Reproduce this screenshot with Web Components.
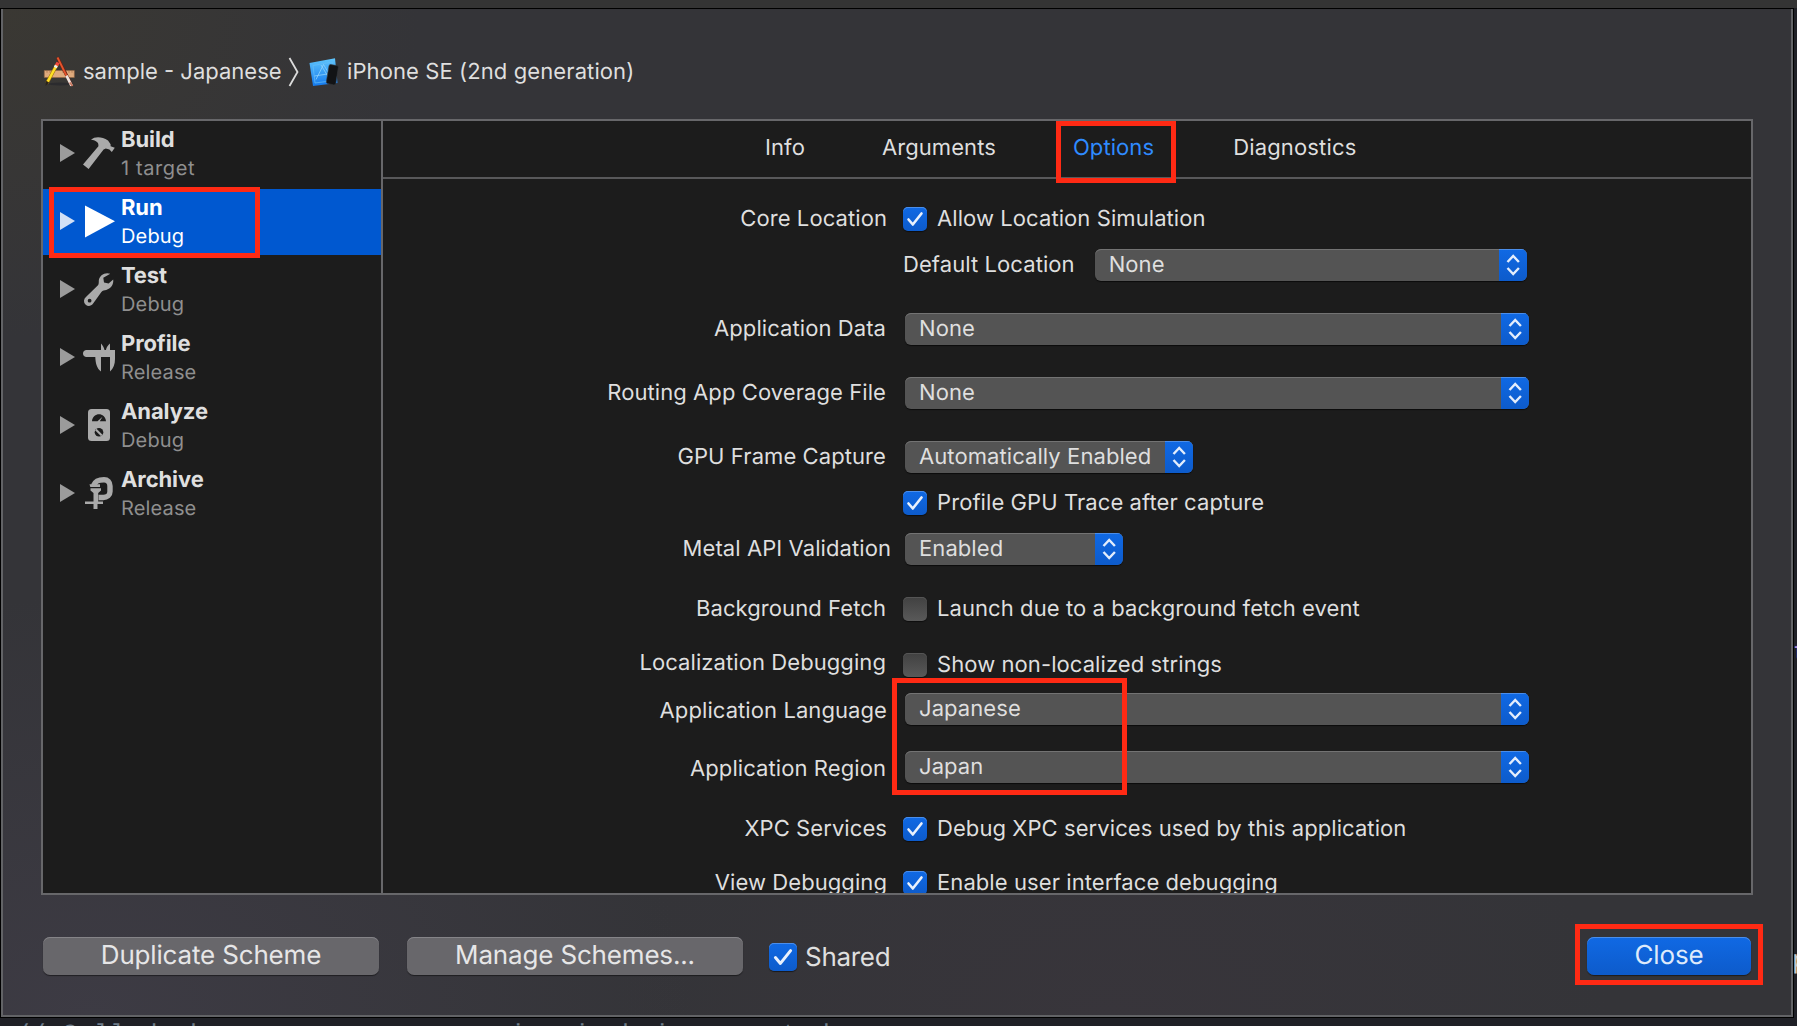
<!DOCTYPE html>
<html lang="en">
<head>
<meta charset="utf-8">
<title>Edit Scheme</title>
<style>
html,body{margin:0;height:100%;overflow:hidden;background:#1f2026}
body{font-family:Inter,"Liberation Sans",sans-serif;font-size:22px;letter-spacing:.08px;color:#dfdfdf;text-rendering:geometricPrecision}
</style>
</head>
<body>
<scheme-window>
  <crumb-bar slot="crumbs"></crumb-bar>
  <scheme-sidebar slot="sidebar">
    <scheme-action icon="hammer" name="Build" detail="1 target" style="--track:.6px"></scheme-action>
    <scheme-action icon="play" name="Run" detail="Debug" selected><mark-frame style="--x:6px;--y:-2px;--w:211px;--h:71px"></mark-frame></scheme-action>
    <scheme-action icon="wrench" name="Test" detail="Debug"></scheme-action>
    <scheme-action icon="caliper" name="Profile" detail="Release"></scheme-action>
    <scheme-action icon="meter" name="Analyze" detail="Debug"></scheme-action>
    <scheme-action icon="clamp" name="Archive" detail="Release"></scheme-action>
  </scheme-sidebar>
  <tab-strip slot="tabs">
    <tab-item>Info</tab-item><tab-item>Arguments</tab-item>
    <tab-item active>Options<mark-frame style="--x:-17px;--y:-13px;--w:120px;--h:62px"></mark-frame></tab-item>
    <tab-item style="padding-left:2px;letter-spacing:.16px">Diagnostics</tab-item>
  </tab-strip>
  <option-row label="Core Location" style="--gap:24px"><check-box checked>Allow Location Simulation</check-box></option-row>
  <option-row label="" style="--gap:14px"><span>Default Location</span><pop-up style="--w:432px;--ml:20px">None</pop-up></option-row>
  <option-row label="Application Data" style="--gap:32px"><pop-up style="--w:624px">None</pop-up></option-row>
  <option-row label="Routing App Coverage File" style="--gap:32px"><pop-up style="--w:624px">None</pop-up></option-row>
  <option-row label="GPU Frame Capture" style="--gap:32px"><pop-up style="--w:288px">Automatically Enabled</pop-up></option-row>
  <option-row label="" style="--gap:14px"><check-box checked>Profile GPU Trace after capture</check-box></option-row>
  <option-row label="Metal API Validation" style="--gap:14px;--end:12px"><pop-up style="--w:218px">Enabled</pop-up></option-row>
  <option-row label="Background Fetch" style="--gap:28px"><check-box>Launch due to a background fetch event</check-box></option-row>
  <option-row label="Localization Debugging" style="--gap:24px;--up:4px"><check-box>Show non-localized strings</check-box></option-row>
  <option-row label="Application Language" style="--gap:12px;--down:4px;--nudge:1px"><pop-up style="--w:624px">Japanese</pop-up><mark-frame style="--x:509px;--y:-15px;--w:235px;--h:117px"></mark-frame></option-row>
  <option-row label="Application Region" style="--gap:26px;--down:4px"><pop-up style="--w:624px">Japan</pop-up></option-row>
  <option-row label="XPC Services" style="--gap:30px;--nudge:1px"><check-box checked>Debug XPC services used by this application</check-box></option-row>
  <option-row label="View Debugging" style="--gap:22px;--nudge:1px"><check-box checked>Enable user interface debugging</check-box></option-row>
  <push-button slot="footer" style="--w:336px">Duplicate Scheme</push-button>
  <push-button slot="footer" style="--w:336px;--ml:28px">Manage Schemes...</push-button>
  <check-box slot="footer" checked large style="margin-left:26px;padding-top:2px">Shared</check-box>
  <push-button slot="footer" primary style="--w:164px;--ml:auto">Close<mark-frame style="--x:-12px;--y:-13px;--w:188px;--h:61px"></mark-frame></push-button>
</scheme-window>

<script>
function define(name, html) {
  const template = document.createElement('template');
  customElements.define(name, class extends HTMLElement {
    connectedCallback() {
      if (this.shadowRoot) return;
      const root = this.attachShadow({ mode: 'open' });
      template.innerHTML = typeof html === 'function' ? html(this) : html;
      root.append(template.content.cloneNode(true));
    }
  });
}

const ICONS = {
  hammer: '<path d="M8 2.8C12-.8 19-.4 25 3.6l2.6 3.6v2l4.2 1.6-3 4.2-2.4-2.6-3.6-.8-2.2.9L5.6 32 0 27.6 15.4 9.2C16 6 13.500 3.300 8 2.800Z"/>',
  play: '<path d="M2 .5 32 16.300 2 32.500Z"/>',
  wrench: '<path fill-rule="evenodd" d="M27.300.7C22-1.200 16.300 2.200 15.800 7.600c-.1 2 .2 3.300-.8 4.700L3.200 23.800a5 5 0 1 0 7.300 6.300l7.900-11.200c1.300-1.400 3.100-1.500 4.800-1.900 4.400-1.200 7.700-5.300 7-10.400l-4.600 3.800-4.600-1-.7-4.600ZM6.600 25.800a1.900 1.900 0 1 1 0 3.800 1.900 1.900 0 0 1 0-3.800Z"/>',
  caliper: '<path d="M3 9h15V2.500c1.300 1.800 3 3.500 3.500 6.500h1.500c.3-3 2.300-5 4-6.500V9h5v9c0 5-1.500 9.500-5 12.500V16h-9v14.500c-4-3-5.500-8-5.700-14.500H3C-1 15.500-1 9.500 3 9Z"/>',
  meter: '<rect x="5" y="0" width="22" height="32" rx="3.500"/><path fill="#1c1c1c" d="M9 12.200C9.800 3 22.200 3 23 12.200h-6.200l2.700-4.500-5 4.500Z"/><circle cx="16" cy="23.200" r="4.300" fill="#1c1c1c"/><path d="m12.800 20.500 6 6" stroke="#aaa" stroke-width="2"/>',
  clamp: '<path d="M15.500 20.500h4.700c4 0 6.800-2.500 6.800-6V9c0-4-2.500-6.300-6-6.300-5.500 0-8.500 1-10.500 5.800" fill="none" stroke="#aaa" stroke-width="5.400"/><path d="M6.500 7.300H17v2.600H7.300ZM7.500 11.300H18v2.200l-2.800 2.500v8.500H20v2.500h-5.500v5h-4v-5H2v-2.500h8.500V16L7.500 13.500Z"/>'
};

define('mark-frame', `<style>
:host{position:absolute;left:var(--x);top:var(--y);width:var(--w);height:var(--h);box-sizing:border-box;border:5px solid #ff2a14;z-index:3;pointer-events:none}
</style>`);

define('crumb-bar', `<style>
:host{display:flex;align-items:center;height:34px;white-space:pre;padding:1px 0 0 2px}
svg{flex:none;display:block}
.app{margin-right:7px}.arrow{margin:0 9px 0 7px}.device{margin-right:8px}
.project{width:198px;letter-spacing:0}
</style>
<svg class="app" width="33" height="32" viewBox="0 0 33 32">
 <ellipse cx="17" cy="28" rx="12" ry="1.500" fill="#2b2b2e"/>
 <path fill="#dfaa7c" stroke="#936643" stroke-width=".6" d="M1.300 14.500h30v7h-30Z"/><path d="M4 14.800v2m3-2v2m3-2v2m10-2v2m3-2v2m3-2v2m3-2v2" stroke="#a5714b" stroke-width=".7"/>
 <path d="M14.500 1.500 28 28" stroke="#6b2015" stroke-width="3"/><path d="M14.500 1.500 23.600 20" stroke="#e5552c" stroke-width="1.800"/><path d="m23.500 19.600 5 10" stroke="#eee4df" stroke-width="2.600"/><path d="m26.800 26.500 2.700 3.500" stroke="#c9785f" stroke-width="2"/>
 <path d="M14 8.500 4 27" stroke="#9d7108" stroke-width="3.600"/><path d="M14 8.500 4.700 25.600" stroke="#ffdf25" stroke-width="2.500"/><path d="m13.500 9.500 1.600-3" stroke="#f1483d" stroke-width="3.400"/><path d="m12.300 11.500 1-2" stroke="#eee" stroke-width="3.200"/><path d="M2.500 30 3 25l3 1.500Z" fill="#29231c"/>
</svg>
<span class="project">sample - Japanese</span>
<svg class="arrow" width="12" height="30" viewBox="0 0 12 30"><path d="m1.500 1 8 14-8 14" fill="none" stroke="#dcdcdc" stroke-width="1.800"/></svg>
<svg class="device" width="30" height="30" viewBox="0 0 30 30">
 <defs><linearGradient id="b" x2="0" y2="1"><stop stop-color="#5fc5fc"/><stop offset="1" stop-color="#1479ed"/></linearGradient></defs>
 <path d="M.5 6 26 1.300 28.500 26 4 29Z" fill="url(#b)"/>
 <path d="M4 8.500 23.500 5 25 23.500 6 26Z" fill="none" stroke="#65bff7" stroke-width=".7"/>
 <path d="m7 22.500 7.500-15L22 20M5.500 19l16-2.500M12 8l8 13" fill="none" stroke="#8fd2fa" stroke-width=".8"/>
 <path d="M21.500 7.500 28 8.600q1.600.4 1.300 2L26.800 26.500q-.4 1.700-2 1.400L18.500 26.500q-1.500-.4-1.100-2L20 9q.3-1.700 1.500-1.500Z" fill="#121315" stroke="#34373b" stroke-width=".6"/>
</svg>
<span style="letter-spacing:.1px">iPhone SE (2nd generation)</span>`);

define('scheme-sidebar', `<style>
:host{display:flex;flex-direction:column;gap:2px;width:338px;flex:none}
</style><slot></slot>`);

define('scheme-action', el => {
  const on = el.hasAttribute('selected');
  return `<style>
:host{display:flex;position:relative;height:66px;${on ? 'background:#0058d0;color:#fff;' : ''}}
.tri{width:15px;height:18px;margin:23px 8px 0 17px;fill:${on ? '#d2e0f6' : '#9b9b9b'};flex:none}
.icon{width:33px;height:33px;margin:15.500px 5px 0 0;fill:${on ? '#fff' : '#aaa'};flex:none;overflow:visible}
.text{display:flex;flex-direction:column;padding-top:5px;line-height:28px}
b{letter-spacing:-.1px;font-weight:${on ? 700 : 650}}
small{font-size:20px;letter-spacing:var(--track,.15px);color:${on ? '#fff' : '#8f8f8f'}}
</style>
<svg class="tri" viewBox="0 0 15 18"><path d="M0 0 15 9 0 18Z"/></svg>
<svg class="icon" viewBox="0 0 33 33">${ICONS[el.getAttribute('icon')]}</svg>
<div class="text"><b>${el.getAttribute('name')}</b><small>${el.getAttribute('detail')}</small></div><slot></slot>`;
});

define('tab-strip', `<style>
:host{display:flex;align-items:center;gap:77px;height:53px;padding:0 0 3px 382px;border-bottom:2px solid #58585a}
</style><slot></slot>`);

define('tab-item', el => `<style>
:host{display:block;position:relative;line-height:28px;${el.hasAttribute('active') ? 'color:#2f8bff;' : ''}}
</style><slot></slot>`);

define('option-row', el => `<style>
:host{display:flex;align-items:center;position:relative;height:32px;margin-top:var(--gap);flex:none;line-height:32px;white-space:nowrap}
label{width:503px;text-align:right;margin-right:var(--end,17px);padding-top:var(--down,0px);padding-bottom:var(--up,0px);flex:none;text-indent:0}
:host([label="Metal API Validation"]) label{width:508px}
:host([style*="nudge"]) label,:host([label="Core Location"]) label{width:504px;margin-right:16px}
</style><label>${el.getAttribute('label')}</label><slot></slot>`);

define('check-box', el => {
  const on = el.hasAttribute('checked'), s = el.hasAttribute('large') ? 28 : 24;
  return `<style>
:host{display:flex;align-items:center;gap:${s === 28 ? 8 : 10}px;${s === 28 ? 'font-size:26px;letter-spacing:-.3px;' : ''}}
i{display:block;width:${s}px;height:${s}px;border-radius:5px;flex:none;background:${on ? 'linear-gradient(#1069e4,#0d5bcb)' : 'linear-gradient(#414141,#595959)'};box-shadow:inset 0 1px ${on ? '#4b8eea' : '#555'},0 1px 1px #0008}
svg{display:block;width:100%;height:100%}
</style><i>${on ? '<svg viewBox="0 0 24 24"><path d="m5.500 12.500 4.300 5L18.500 6.500" fill="none" stroke="#e9f1fd" stroke-width="2.600" stroke-linecap="round" stroke-linejoin="round"/></svg>' : ''}</i><slot></slot>`;
});

define('pop-up', `<style>
:host{display:flex;align-items:stretch;width:var(--w);height:32px;margin-left:var(--ml,2px);background:#545454;border-radius:6px;overflow:hidden;line-height:32px;box-shadow:inset 0 1px #737373,0 1px 1px #0009}
.value{flex:1;padding-left:14px}
.knob{width:28px;background:linear-gradient(#1069e4,#0d5bcb);box-shadow:inset 0 1px #4b8eea}
svg{display:block}
</style><div class="value"><slot></slot></div><div class="knob"><svg width="28" height="32" viewBox="0 0 28 32"><path d="m8.500 13 5.700-6 5.700 6M8.500 19l5.700 6 5.700-6" fill="none" stroke="#e3edfc" stroke-width="2.400"/></svg></div>`);

define('push-button', el => {
  const p = el.hasAttribute('primary');
  return `<style>
:host{display:block;position:relative;width:var(--w);height:38px;margin-left:var(--ml,0);border-radius:7px;text-align:center;line-height:38px;font-size:26px;letter-spacing:-.17px;
color:${p ? '#dfeafb' : '#e6e6e7'};background:${p ? 'linear-gradient(#1069e4,#0d5bcb)' : '#68676b'};box-shadow:inset 0 1px ${p ? '#4b8eea' : '#858488'},0 1px 1px #0007}
</style><slot></slot>`;
});

define('code-scrap', `<style>
:host{position:absolute;font:26px/30px "Liberation Mono",monospace;letter-spacing:.4px;white-space:pre;overflow:hidden}
</style><slot></slot>`);

define('scheme-window', `<style>
:host{display:flex;flex-direction:column;position:relative;width:1797px;height:1026px;overflow:hidden;background:#1f2026}
.toolbar{height:8px;background:#343434;flex:none}
.sheet{display:flex;flex-direction:column;box-sizing:border-box;width:1794px;height:1010px;flex:none;border:1px solid #000;
background:radial-gradient(420px 330px at 0 0,#3a3833,transparent),radial-gradient(600px 420px at 5% 100%,#3d3b44,transparent),radial-gradient(500px 300px at 62% 100%,#38353b,transparent),#343438}
.inner{flex:1;display:flex;flex-direction:column;border:solid #626366;border-width:0 2px 2px 2px;padding:45px 38px 0 38px}
.panel{display:flex;margin-top:30px;height:772px;border:2px solid #67676a;background:#1c1c1c;width:1708px}
.main{flex:1;display:flex;flex-direction:column;border-left:2px solid #67676a;min-width:0}
.options{flex:1;display:flex;flex-direction:column;overflow:hidden;min-height:0}
.footer{display:flex;align-items:center;padding:42px 2px 0}
</style>
<div class="toolbar"></div>
<div class="sheet"><div class="inner">
<slot name="crumbs"></slot>
<div class="panel"><slot name="sidebar"></slot><div class="main"><slot name="tabs"></slot><div class="options"><slot></slot></div></div></div>
<div class="footer"><slot name="footer"></slot></div>
</div></div>
<code-scrap style="left:14px;top:1020px;height:6px;color:#6f7d89">// Called when a new scene session is being created.</code-scrap>
<code-scrap style="left:1794px;top:638px;width:3px;color:#b48ddb;text-indent:-1.500px">t</code-scrap>
<code-scrap style="left:1792px;top:946px;width:5px;color:#c8c8c8;clip-path:inset(0 0 0 2px)">p</code-scrap>`);
</script>
</body>
</html>
